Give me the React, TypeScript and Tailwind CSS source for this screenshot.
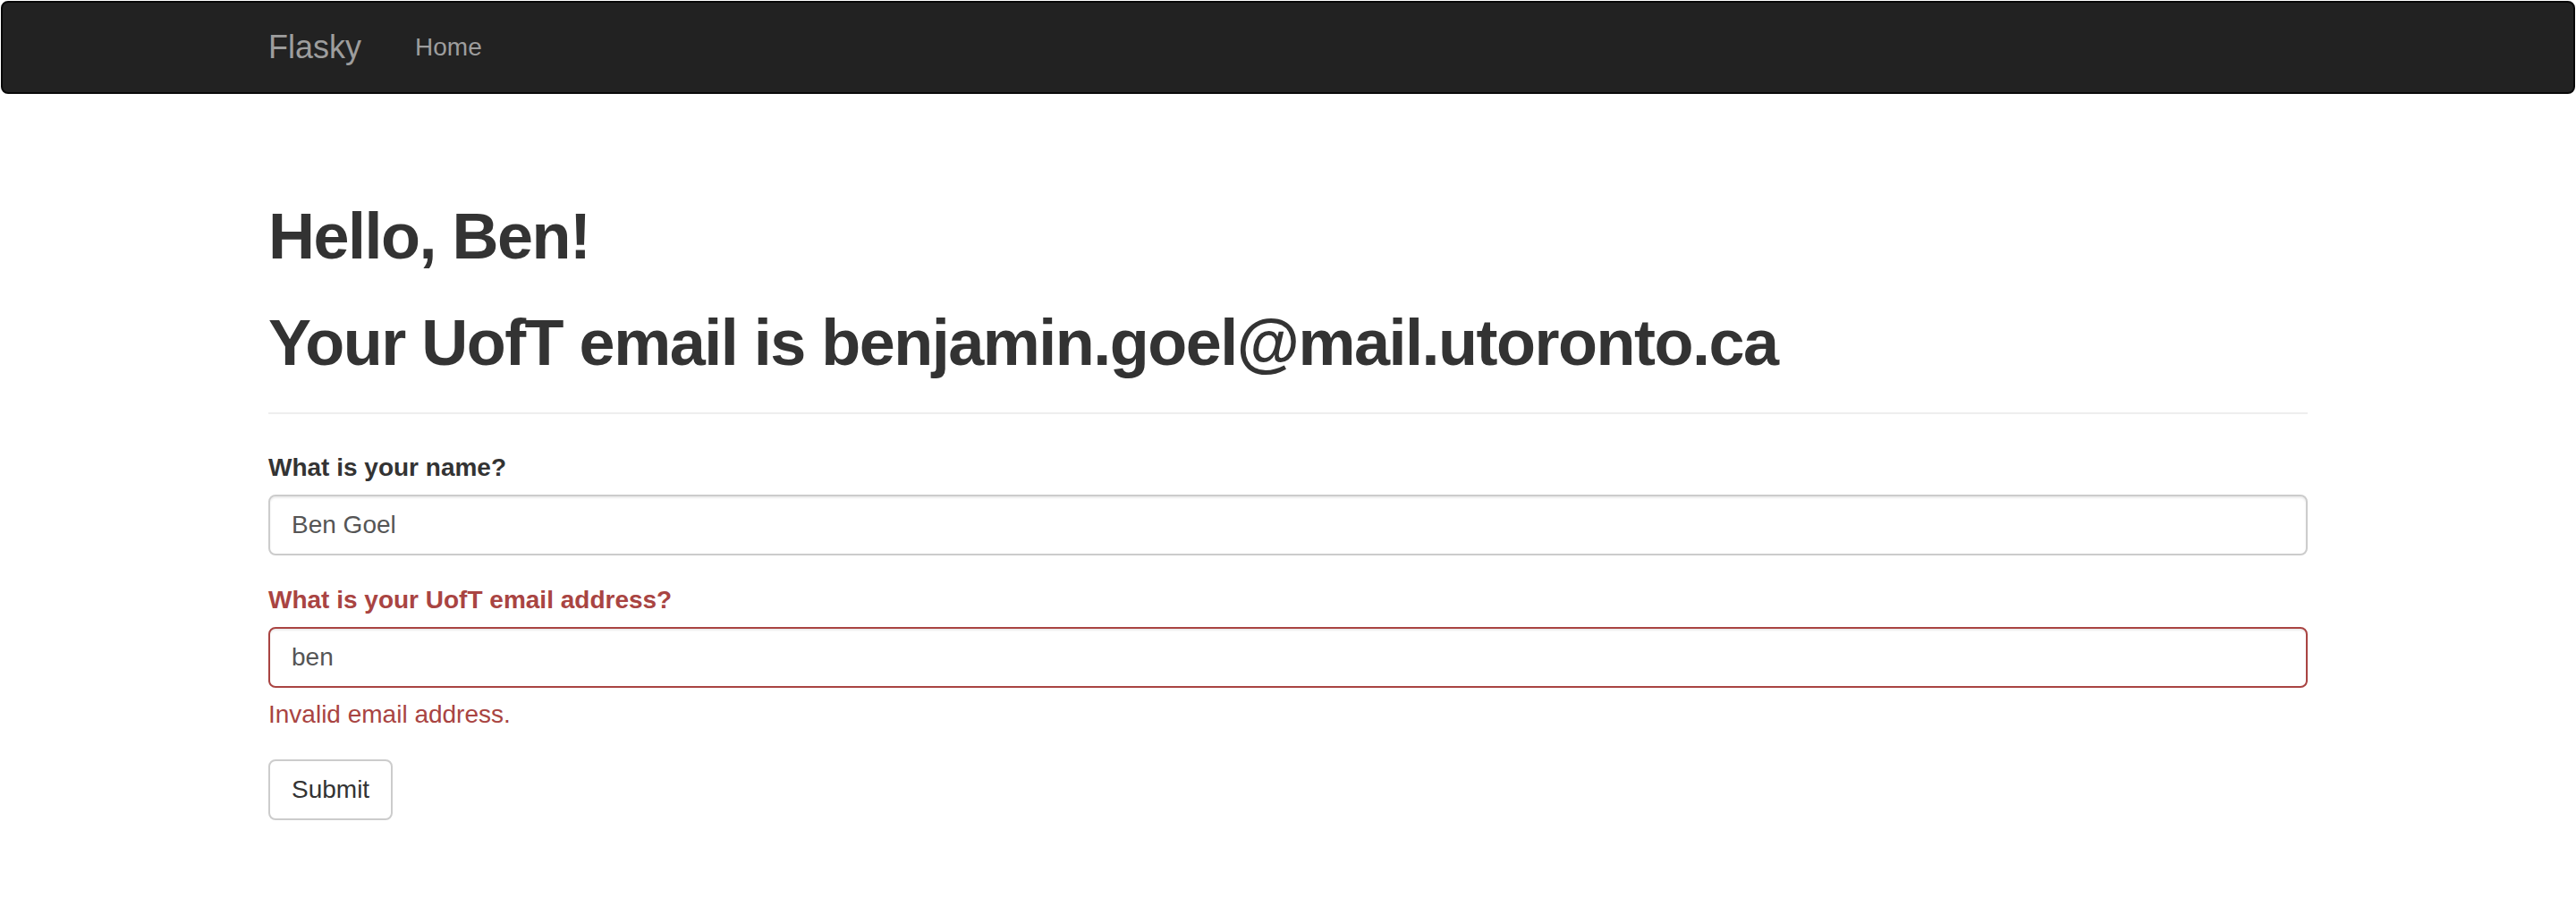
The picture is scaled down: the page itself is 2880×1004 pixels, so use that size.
export default function App() {
  return (
    <div className="min-h-screen bg-white text-[#333] font-['Liberation_Sans',Arial,sans-serif] text-[28px] leading-[40px]">
      {/* navbar */}
      <nav className="mx-px mt-px mb-[40px] h-[104px] rounded-[8px] border-2 border-[#080808] bg-[#222]">
        <div className="mx-auto flex w-[2340px] px-[30px]">
          <a className="-ml-[30px] h-[100px] px-[30px] py-[30px] text-[36px] leading-[40px] text-[#9d9d9d]">
            Flasky
          </a>
          <ul className="flex">
            <li>
              <a className="block px-[30px] py-[30px] text-[28px] leading-[40px] text-[#9d9d9d]">
                Home
              </a>
            </li>
          </ul>
        </div>
      </nav>

      <div className="mx-auto flow-root w-[2340px] px-[30px]">
        <div className="mt-[80px] mb-[40px] border-b-2 border-[#eee] pb-[18px]">
          <h1 className="mb-[40px] text-[72px] font-bold leading-[79.2px] tracking-[-1.5px]">Hello, Ben!</h1>
          <h1 className="mb-[20px] text-[72px] font-bold leading-[79.2px] tracking-[-1.5px]">
            Your UofT email is benjamin.goel@mail.utoronto.ca
          </h1>
        </div>

        <form>
          <div className="mb-[30px]">
            <label className="mb-[10px] inline-block font-bold">What is your name?</label>
            <input
              type="text"
              defaultValue="Ben Goel"
              className="block h-[68px] w-full rounded-[8px] border-2 border-[#ccc] bg-white px-[24px] py-[12px] text-[28px] leading-[40px] text-[#555] shadow-[inset_0_2px_2px_rgba(0,0,0,0.075)] outline-none"
            />
          </div>

          <div className="mb-[30px]">
            <label className="mb-[10px] inline-block font-bold text-[#a94442]">
              What is your UofT email address?
            </label>
            <input
              type="text"
              defaultValue="ben"
              className="block h-[68px] w-full rounded-[8px] border-2 border-[#a94442] bg-white px-[24px] py-[12px] text-[28px] leading-[40px] text-[#555] shadow-[inset_0_2px_2px_rgba(0,0,0,0.075)] outline-none"
            />
            <span className="mt-[10px] block text-[#a94442]">Invalid email address.</span>
          </div>

          <button
            type="button"
            className="inline-block rounded-[8px] border-2 border-[#ccc] bg-white px-[24px] py-[12px] text-[28px] leading-[40px] text-[#333]"
          >
            Submit
          </button>
        </form>
      </div>
    </div>
  );
}
